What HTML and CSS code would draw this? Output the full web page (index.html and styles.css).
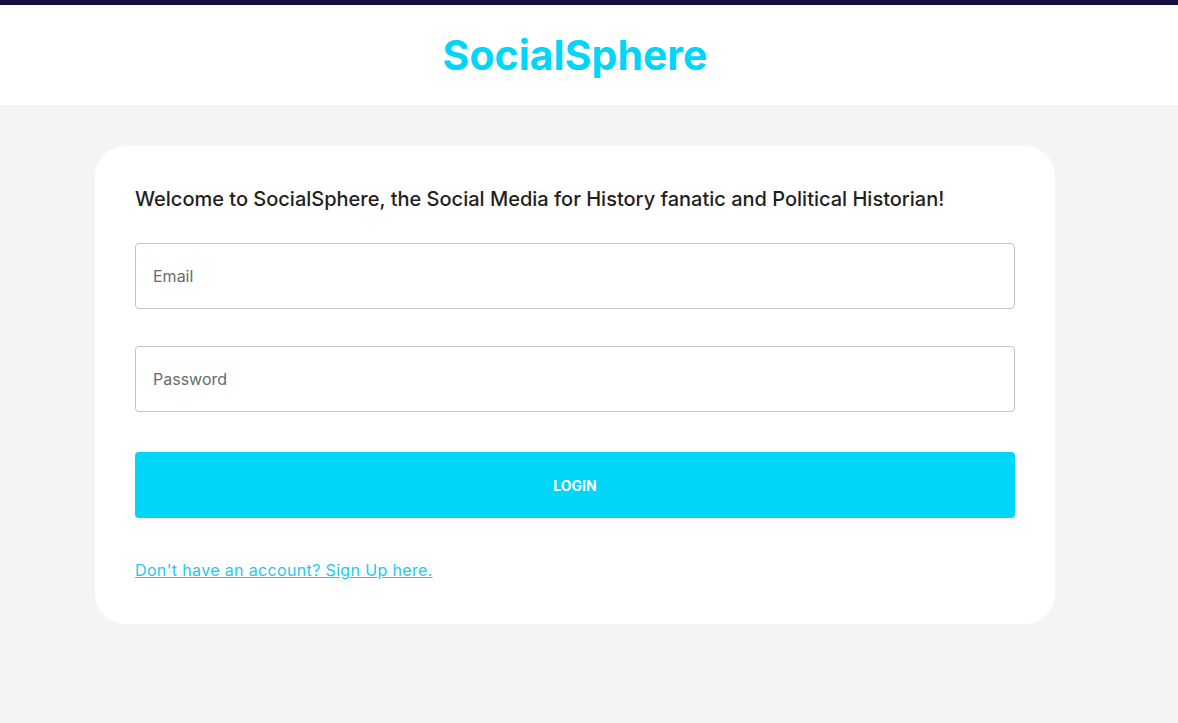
FILE: index.html
```html
<!DOCTYPE html>
<html lang="en">
<head>
<meta charset="utf-8">
<title>SocialSphere - Login</title>
<link rel="stylesheet" href="styles.css">
</head>
<body>
<div class="topbar"></div>
<header class="header">
  <h1 class="brand">SocialSphere</h1>
</header>
<main class="main">
  <section class="card">
    <h2 class="welcome">Welcome to SocialSphere, the Social Media for History fanatic and Political Historian!</h2>
    <form class="form">
      <input class="field" type="email" placeholder="Email">
      <input class="field" type="password" placeholder="Password">
      <button class="login" type="button">LOGIN</button>
    </form>
    <a class="signup" href="#">Don't have an account? Sign Up here.</a>
  </section>
</main>
</body>
</html>
```
FILE: styles.css
```css
* { box-sizing: border-box; }
html, body { margin: 0; padding: 0; }
body {
  background: #f4f4f4;
  font-family: "Inter", "Noto Sans", sans-serif;
  color: #1f1f1f;
  min-height: 723px;
}
.topbar {
  height: 5px;
  background: #1a0d45;
}
.header {
  background: #ffffff;
  height: 100px;
  display: flex;
  align-items: center;
  justify-content: center;
  padding-right: 28px;
}
.brand {
  margin: 0;
  font-family: "Inter", sans-serif;
  font-weight: 700;
  font-size: 41px;
  color: #00d5fa;
}
.main {
  padding: 41px 0 0 95px;
}
.card {
  width: 960px;
  background: #ffffff;
  border-radius: 30px;
  padding: 40px 40px 42px;
}
.welcome {
  margin: 0 0 31px;
  font-size: 20px;
  font-weight: 500;
  line-height: 26px;
  color: #1f1f1f;
}
.form {
  display: flex;
  flex-direction: column;
}
.field {
  height: 66px;
  border: 1px solid #c4c4c4;
  border-radius: 4px;
  padding: 0 17px;
  font-family: "Inter", sans-serif;
  font-size: 16px;
  color: #333;
  margin-bottom: 37px;
  outline: none;
}
.field::placeholder { color: #6a6a6a; }
.field + .field { margin-bottom: 40px; }
.login {
  height: 66px;
  border: none;
  border-radius: 4px;
  background: #00d5fa;
  color: #ffffff;
  font-family: "Inter", sans-serif;
  font-weight: 700;
  font-size: 14px;
  cursor: pointer;
  margin-bottom: 40px;
}
.signup {
  display: inline-block;
  font-size: 16px;
  line-height: 24px;
  letter-spacing: 0.35px;
  color: #1ec8ef;
  text-decoration: underline;
}
```
